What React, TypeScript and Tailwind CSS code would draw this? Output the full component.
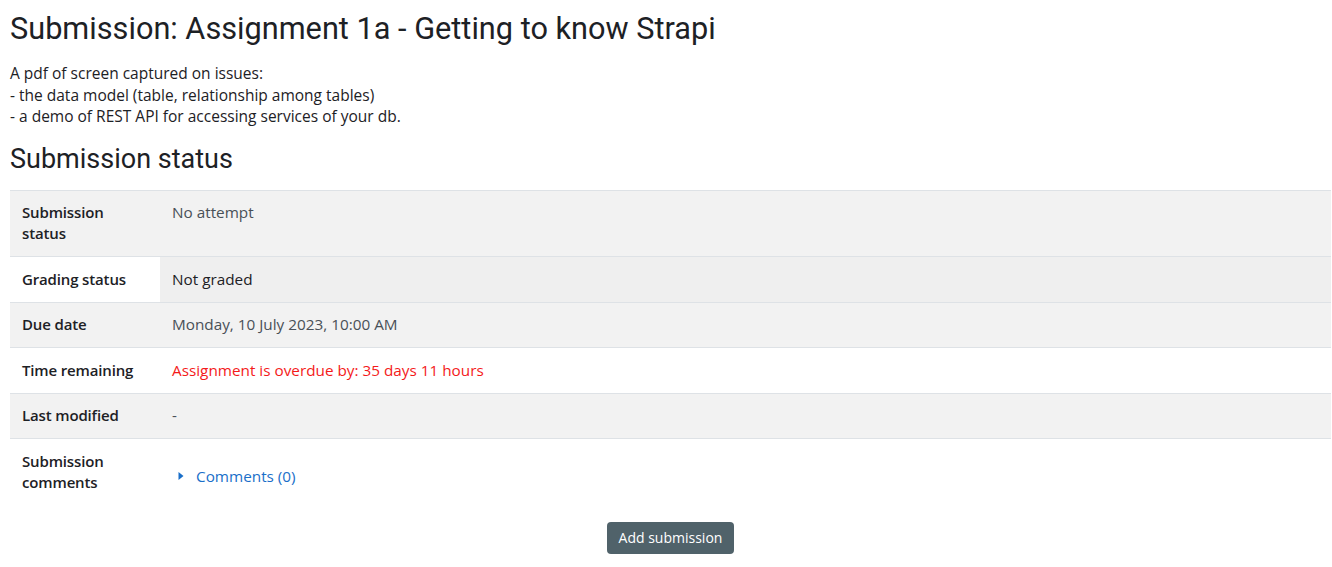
export default function App() {
  const rows: { label: string; value: React.ReactNode; bg: string; valueBg?: string }[] = [
    { label: "Submission status", value: <span className="text-[#495057]">No attempt</span>, bg: "bg-[#f2f2f2]" },
    { label: "Grading status", value: <span className="text-[#1d2125]">Not graded</span>, bg: "bg-white", valueBg: "bg-[#efefef]" },
    { label: "Due date", value: <span className="text-[#495057]">Monday, 10 July 2023, 10:00 AM</span>, bg: "bg-[#f2f2f2]" },
    { label: "Time remaining", value: <span className="text-[#f41a1a]">Assignment is overdue by: 35 days 11 hours</span>, bg: "bg-white" },
    { label: "Last modified", value: <span className="text-[#495057]">-</span>, bg: "bg-[#f2f2f2]" },
  ]

  return (
    <div className="bg-white min-h-screen pl-[10px] pr-px pt-[10px] text-[#1d2125]" style={{ fontFamily: '"Open Sans", sans-serif' }}>
      {/* Title */}
      <h1 className="text-[30.7px] leading-[38px] text-[#1d2125] mb-[15px]" style={{ fontFamily: 'Roboto, sans-serif' }}>
        Submission: Assignment 1a - Getting to know Strapi
      </h1>

      {/* Intro */}
      <div className="text-[15.5px] leading-[21.5px] text-[#1d2125]">
        <p>A pdf of screen captured on issues:</p>
        <p>- the data model (table, relationship among tables)</p>
        <p>- a demo of REST API for accessing services of your db.</p>
      </div>

      <h2 className="text-[27px] leading-[32px] mt-[15px] mb-[15px] text-[#1d2125]" style={{ fontFamily: 'Roboto, sans-serif' }}>
        Submission status
      </h2>

      {/* Status table */}
      <div className="border-t border-[#dee2e6] text-[15px]">
        {rows.map((r, i) => (
          <div key={i} className={`flex border-b border-[#dee2e6] ${r.bg}`}>
            <div className="w-[150px] shrink-0 px-3 py-[11.75px] leading-[21px] font-semibold text-[#1d2125] tracking-[-0.15px]">
              {r.label}
            </div>
            <div className={`flex-1 px-3 py-[11.75px] leading-[21px] text-[15.3px] ${r.valueBg ?? ""}`}>{r.value}</div>
          </div>
        ))}
        <div className="flex bg-white">
          <div className="w-[150px] shrink-0 px-3 py-[11.75px] leading-[21px] font-semibold tracking-[-0.15px]">Submission comments</div>
          <div className="flex-1 px-3 pt-[9px] flex items-center gap-[11px] text-[#1a6fc9] text-[15.3px]">
            <svg width="7" height="10" viewBox="0 0 7 10" className="ml-[6px]">
              <path d="M0.5 1 L5.5 5 L0.5 9 Z" fill="#1a6fc9" />
            </svg>
            <span>Comments (0)</span>
          </div>
        </div>
      </div>

      <div className="flex justify-center mt-[17px]">
        <button className="bg-[#50626a] text-white text-[14px] px-[12px] h-[32px] rounded-[4px]">Add submission</button>
      </div>
    </div>
  )
}
